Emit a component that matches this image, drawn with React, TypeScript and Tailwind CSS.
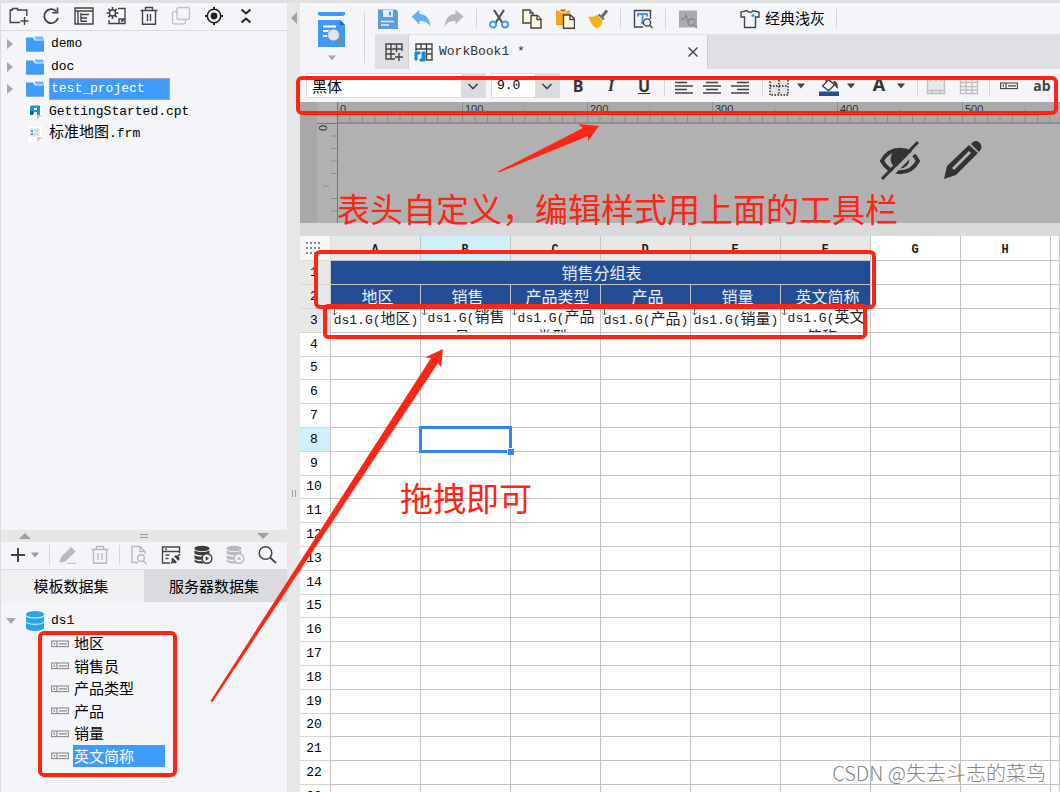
import type { ReactNode } from "react"
import clsx from "clsx"

const columns = ["A", "B", "C", "D", "E", "F", "G", "H", "I"]
const fields = ["地区", "销售员", "产品类型", "产品", "销量", "英文简称"]
const headers = ["地区", "销售", "产品类型", "产品", "销量", "英文简称"]
const rows = Array.from({ length: 23 }, (_, i) => i + 1)

const MONO = "font-['Liberation_Mono','Noto_Sans_CJK_SC',monospace]"

// Latin runs are set a little smaller than the Chinese ones
function Mixed({ text }: { text: string }) {
  const parts = text.match(/[\x20-\x7e]+|[^\x20-\x7e]+/g) ?? []
  return (
    <span className={clsx(MONO, "text-[13px]")}>
      {parts.map((part, i) => (
        <span key={i} className={/^[\x20-\x7e]/.test(part) ? "text-[13px]" : "text-[15px]"}>
          {part}
        </span>
      ))}
    </span>
  )
}

function Icon({ children, className = "size-5", box = 20 }: { children: ReactNode; className?: string; box?: number }) {
  return (
    <svg viewBox={`0 0 ${box} ${box}`} className={clsx("shrink-0", className)} fill="none" stroke="#444" strokeWidth="1.4" aria-hidden="true">
      {children}
    </svg>
  )
}

function IconButton({ label, children, className = "size-5" }: { label: string; children: ReactNode; className?: string }) {
  return (
    <button type="button" aria-label={label} className={clsx("flex shrink-0 items-center justify-center", className)}>
      {children}
    </button>
  )
}

function Sep({ className = "" }: { className?: string }) {
  return <span className={clsx("h-5 w-px shrink-0 bg-[#d6d7da]", className)} />
}

function Caret({ color = "#444" }: { color?: string }) {
  return (
    <svg viewBox="0 0 10 6" className="h-[6px] w-[10px] shrink-0" aria-hidden="true">
      <path d="M1 0.5h8L5 5.5z" fill={color} />
    </svg>
  )
}

function FolderIcon() {
  return (
    <svg viewBox="0 0 18 16" className="h-4 w-[18px] shrink-0" aria-hidden="true">
      <path d="M0 1.500h7l2 3h9V15a.8.8 0 0 1-.8.8H.8A.8.8 0 0 1 0 15z" fill="#409cfb" />
      <path d="M8.300.8H17v1.600h1v1.200h-8z" fill="#409cfb" />
      <path d="M8.800 2.200H17" stroke="#cfe4fb" strokeWidth="0.700" />
    </svg>
  )
}

function FileIcon({ kind }: { kind: "cpt" | "frm" }) {
  return (
    <svg viewBox="0 0 18 18" className="size-[18px] shrink-0" aria-hidden="true">
      <path d="M2 1h14v11l-4 5H2z" fill="#fff" />
      <path d="M11 17v-5h5z" fill="#c9cbcf" />
      {kind === "cpt" ? (
        <>
          <path d="M5 2.500h9V12h-3V9H8v2H4V4z" fill="#1693dc" />
          <path d="M8 5h3v2H8z" fill="#fff" />
          <path d="M4 8h3v4H4z" fill="#0763b4" />
        </>
      ) : (
        <>
          <path d="M4 4h9v7H4z" fill="#eef1f4" stroke="#c9ced4" strokeWidth="0.800" />
          <path d="M5 5h2v2H5zM5 8h2v2H5z" fill="#3b9fd9" />
          <path d="M8 6h4M8 9h4" stroke="#b9bec4" />
        </>
      )}
    </svg>
  )
}

function FieldIcon({ color = "#8b8b8b" }: { color?: string }) {
  return (
    <svg viewBox="0 0 18 8" className="h-2 w-[18px] shrink-0" fill="none" stroke={color} aria-hidden="true">
      <rect x="0.600" y="1" width="16.800" height="5.600" strokeWidth="1.100" />
      <path d="M6 1v5.600M8 3.800h8M3.300 2.600v2.400" strokeWidth="1.200" />
    </svg>
  )
}

function DbIcon({ color, badge }: { color: string; badge: "play" | "close" }) {
  return (
    <Icon>
      <g fill={color} stroke="none">
        <ellipse cx="9" cy="3.500" rx="7.500" ry="2.700" />
        <path d="M1.500 5.300c2 2.400 13 2.400 15 0v3.200c-2 2.400-13 2.400-15 0z" />
        <path d="M1.500 10c1.500 1.500 5 1.800 8 1.600v3c-3 .3-7 0-8-1.400z" />
        <path d="M1.500 14.500c1.500 1.500 4 1.800 7.500 1.700l2 2c-5 .7-9-.3-9.500-1.600z" />
      </g>
      <circle cx="14" cy="13.500" r="4.800" fill="#f4f5f8" stroke={color} strokeWidth="1.400" />
      {badge === "play" ? <path d="M12.700 11.300v4.400l3.300-2.200z" fill={color} stroke="none" /> : <path d="m12.300 11.800 3.400 3.400m0-3.400-3.400 3.400" stroke={color} strokeWidth="1.200" />}
    </Icon>
  )
}

function ProjectToolbar() {
  return (
    <div className="flex h-[28px] items-center justify-between border-b border-[#d9dadd] pr-[31px] pb-px pl-2">
      <IconButton label="新建文件夹">
        <Icon><path d="M11 16.500H1.200V4H3.500V2.500h5V4h9.300v6M1.200 4.300h2M15.500 11v8M11.500 15h8" /></Icon>
      </IconButton>
      <IconButton label="刷新">
        <Icon><path d="M15.500 5.500A7 7 0 1 0 17 12" strokeWidth="1.800" /><path d="M16.500 1.500v5.300h-5.300" strokeWidth="1.600" /></Icon>
      </IconButton>
      <IconButton label="展开目录">
        <Icon><path d="M1 2h18v16H1zM1 5h18M4 5v13M7 7v8.500M7 8.500h8M7 12h6M7 15.300h6" /></Icon>
      </IconButton>
      <IconButton label="设置">
        <Icon>
          <circle cx="6.500" cy="7" r="3" />
          <path d="M6.500 1v3M6.500 10v3M.5 7h3M9.500 7h3M2.300 2.800l2 2M8.700 9.200l2 2M10.700 2.800l-2 2M4.300 9.200l-2 2" strokeWidth="1.700" />
          <path d="M12 2.500h7v15H3V14M13 17v-4h6M15 15.500l3-1.500" />
        </Icon>
      </IconButton>
      <IconButton label="删除">
        <Icon><path d="M1.500 4.500h17M6.500 4V1.500h7V4M3.500 4.500v13.700h13V4.500M8.500 8v7M11.500 8v7" /></Icon>
      </IconButton>
      <IconButton label="复制">
        <Icon><g stroke="#c3c4c7"><rect x="6" y="1.500" width="12.500" height="12" rx="2" /><path d="M6 5.500H3.500a2 2 0 0 0-2 2V16a2 2 0 0 0 2 2h9a2 2 0 0 0 2-2v-2.500" /></g></Icon>
      </IconButton>
      <IconButton label="定位">
        <Icon><g stroke="#222"><circle cx="10" cy="10" r="6.700" strokeWidth="1.600" /><circle cx="10" cy="10" r="2.700" fill="#222" /><path d="M10 1v3M10 16v3M1 10h3M16 10h3" strokeWidth="2" /></g></Icon>
      </IconButton>
      <IconButton label="收起">
        <Icon><path d="m5.500 3.500 4.500 4 4.500-4M5.500 16.500l4.500-4 4.500 4" stroke="#222" strokeWidth="2" /></Icon>
      </IconButton>
    </div>
  )
}

function ProjectTree() {
  return (
    <ul className="flex flex-1 flex-col pt-[2px] leading-5">
      {["demo", "doc", "test_project"].map((name) => (
        <li key={name} className="flex h-[22px] items-center even:h-[23px]">
          <span className="ml-[6px] h-0 w-0 border-y-[5px] border-l-[6px] border-y-transparent border-l-[#a7a8ab]" />
          <span className="mr-[5px] ml-[13px] flex"><FolderIcon /></span>
          {name === "test_project" ? (
            <span className="flex h-[22px] w-[121px] items-center border border-[#a79cc8] bg-[#409cfb] px-px text-white"><Mixed text={name} /></span>
          ) : (
            <span className="flex px-[2px]"><Mixed text={name} /></span>
          )}
        </li>
      ))}
      <li className="flex h-[23px] items-center gap-[5px] pl-[25px]"><FileIcon kind="cpt" /><Mixed text="GettingStarted.cpt" /></li>
      <li className="flex h-[22px] items-center gap-[5px] pl-[25px]"><FileIcon kind="frm" /><Mixed text="标准地图.frm" /></li>
    </ul>
  )
}

function DatasetPanel() {
  return (
    <section className="h-[262px] shrink-0">
      <div className="flex h-3 items-center justify-between bg-[#e7e7e8] pr-[18px] pl-[18px]">
        <span className="border-x-[6px] border-b-[6px] border-x-transparent border-b-[#a0a1a4]" />
        <span className="h-1 w-2 border-y border-[#a0a1a4]" />
        <span className="border-x-[6px] border-t-[6px] border-x-transparent border-t-[#a0a1a4]" />
      </div>
      <div className="flex h-7 items-center border-b border-[#dcdde0] pb-px pl-2">
        <button type="button" aria-label="新增数据集" className="flex w-[31px] items-center gap-[3px]">
          <Icon className="size-[18px]" box={18}><path d="M9 2v14M2 9h14" strokeWidth="2" /></Icon>
          <Caret color="#999" />
        </button>
        <Sep className="ml-[9px]" />
        <div className="ml-2 flex gap-3">
          <IconButton label="编辑">
            <Icon><path d="m2 17 1.500-5L13 2.500l4 4L7.500 16zM9 18.300h9" fill="#b9babd" stroke="#b9babd" strokeWidth="1" /></Icon>
          </IconButton>
          <IconButton label="删除数据集">
            <Icon><path d="M1.500 4.500h17M6.500 4V1.500h7V4M3.500 4.500v13.700h13V4.500M8 8v7M12 8v7" stroke="#b9babd" /></Icon>
          </IconButton>
        </div>
        <Sep className="ml-[9px]" />
        <div className="ml-[9px] flex gap-3">
          <IconButton label="预览">
            <Icon><path d="M9 17.500H3v-16h8l5 5V9M11 1.500v5h5M14.500 16l3 3" stroke="#b9babd" /><circle cx="12" cy="13" r="3.300" stroke="#b9babd" /></Icon>
          </IconButton>
          <IconButton label="编辑连接">
            <Icon>
              <path d="M9 18H1.500V2h17v6M1.500 6.500h17M4 4.300h2M4.500 10h4M4.500 13.500h3" />
              <path d="m10 18.500 2-2M17 11l2-2" strokeWidth="1.600" />
              <path d="m11.500 12.500 4.500 4.500-1.500 1.200c-3 .5-4.500-2-4-4.200zM13 11.500l1.500-1.200c3-.5 4.500 2 4 4.200l-1.200 1.200z" fill="#444" stroke="none" />
            </Icon>
          </IconButton>
          <IconButton label="连接数据库"><DbIcon color="#3c3c3c" badge="play" /></IconButton>
          <IconButton label="断开数据库"><DbIcon color="#b9babd" badge="close" /></IconButton>
          <IconButton label="搜索">
            <Icon><circle cx="8.500" cy="8" r="6.300" strokeWidth="1.500" /><path d="m13 12.500 6 5.500" strokeWidth="1.800" /></Icon>
          </IconButton>
        </div>
      </div>
      <div className="flex h-8 text-[15px]">
        <button type="button" className="flex-1 bg-[#f1f1f3] pr-[3px]">模板数据集</button>
        <button type="button" className="flex-1 bg-[#d9dbdf] pr-[3px]">服务器数据集</button>
      </div>
      <ul className="pt-2">
        <li className="flex h-[22px] items-center leading-5">
          <span className="ml-[5px] border-x-[5px] border-t-[6px] border-x-transparent border-t-[#a7a8ab]" />
          <svg viewBox="0 0 18 20" className="mr-[7px] ml-[10px] h-5 w-[18px]" aria-hidden="true">
            <path d="M0 3v14c1 4 17 4 18 0V3z" fill="#2ba5e3" />
            <ellipse cx="9" cy="3" rx="9" ry="3" fill="#2ba5e3" />
            <path d="M0 4.500c1 3.300 17 3.300 18 0M0 10.800c1 3.300 17 3.300 18 0" stroke="#f4f5f8" strokeWidth="1.100" fill="none" />
          </svg>
          <Mixed text="ds1" />
        </li>
        {fields.map((field) => (
          <li key={field} className="flex h-[22px] items-center gap-1 pl-[50px] even:h-[23px]">
            <FieldIcon />
            <span className={clsx("flex h-[22px] items-center px-px text-[15px]", field === "英文简称" && "w-[92px] bg-[#409cfb] text-white")}>{field}</span>
          </li>
        ))}
      </ul>
    </section>
  )
}

function MainToolbar() {
  return (
    <div className="flex h-8 items-center gap-[11px] border-b border-[#e0e1e3] pl-[2px]">
      <IconButton label="保存" className="size-[22px]">
        <Icon>
          <path d="M0 .5h18l2 2V20H0z" fill="#5b9cdb" stroke="none" />
          <path d="M5 1h10v7H5z" fill="#e4eefa" stroke="none" />
          <path d="M11 2.500h2v4h-2z" fill="#5b9cdb" stroke="none" />
          <path d="M3 12.500h13M3 16h8" stroke="#e4eefa" strokeWidth="1.500" />
        </Icon>
      </IconButton>
      <IconButton label="撤销" className="size-[22px]">
        <Icon><path d="M.5 7.500 8.500 1v4C15 5 19 10 19.500 18c-2-4-5-6.500-11-6v3.500z" fill="#6aaef0" stroke="none" /></Icon>
      </IconButton>
      <IconButton label="重做" className="size-[22px]">
        <Icon><path d="M19.500 7.500 11.500 1v4C5 5 1 10 .5 18c2-4 5-6.500 11-6v3.500z" fill="#b7b8ba" stroke="none" /></Icon>
      </IconButton>
      <Sep />
      <IconButton label="剪切" className="size-[22px]">
        <Icon>
          <path d="m5 1 8.500 13M15 1 6.500 14" stroke="#555" strokeWidth="2.200" />
          <circle cx="4" cy="15.500" r="3" stroke="#3f9bf5" strokeWidth="1.900" />
          <circle cx="16" cy="15.500" r="3" stroke="#3f9bf5" strokeWidth="1.900" />
        </Icon>
      </IconButton>
      <IconButton label="复制单元格" className="size-[22px]">
        <Icon><g fill="#fff8e4"><path d="M1 1h7l3 3v10H1z" /><path d="M8 1v3h3" /><path d="M9 6.500h6.500l3.500 3.500v9H9z" /><path d="M15 6.500v4h4" /></g></Icon>
      </IconButton>
      <IconButton label="粘贴" className="size-[22px]">
        <Icon>
          <path d="M1 1.500h14V16H1z" fill="#f2a818" stroke="none" />
          <path d="M5 0h6v3H5z" fill="#c76b1b" stroke="#fff" strokeWidth="0.800" />
          <path d="M8.500 6h7l4 4v9.300h-11z" fill="#fff8e4" /><path d="M15 6v4.500h4.500" />
        </Icon>
      </IconButton>
      <IconButton label="格式刷" className="size-[22px]">
        <Icon>
          <path d="m19 1.500-5 6" stroke="#666b75" strokeWidth="3" />
          <path d="m10.500 5.500 5.500 5" stroke="#666b75" strokeWidth="2" />
          <path d="M.5 7.500c4 1 6-.5 8.500-1.500l5.500 5.500c0 3.500-2 6.500-5.500 8C5.500 18 2 13.500.5 7.500z" fill="#f4b01e" stroke="none" />
        </Icon>
      </IconButton>
      <Sep />
      <IconButton label="查找" className="size-[22px]">
        <Icon><path d="M10 18H1.500V1.500h16V10M16.500 16l3 3" /><path d="M5 7.500V5h9v2.500M9.500 5v9M8 14h3" stroke="#3f9bf5" strokeWidth="2" /><circle cx="14" cy="13.500" r="3.600" fill="#f4f5f8" /></Icon>
      </IconButton>
      <Sep />
      <IconButton label="性能检测" className="size-[22px]">
        <Icon><path d="M1 1.500h18v17H1z" fill="#aaabad" stroke="none" /><path d="M3 10h3l2-4 2 7 2-3M16 16l3 3" stroke="#8b8c8e" /><circle cx="13.500" cy="13" r="3.300" stroke="#8b8c8e" /></Icon>
      </IconButton>
      <button type="button" className="ml-[30px] flex items-center gap-[5px] text-[15px] whitespace-nowrap">
        <Icon><path d="M7 1.500c1 2.500 5 2.500 6 0L19 3v5h-3.500v10.500h-11V8H1V3z" /><circle cx="13" cy="6.500" r="1.600" fill="#3f9bf5" stroke="none" /></Icon>
        经典浅灰
      </button>
      <Sep />
    </div>
  )
}

function WorkbookTabs() {
  return (
    <div className="flex h-[34px] bg-[#dfe0e3]">
      <button type="button" aria-label="新建工作簿" className="flex w-[34px] items-center justify-center border-r border-[#d0d1d4] pl-1">
        <Icon><path d="M18 9V2H2v15h9M2 7h16M2 12h9M7 2v15M12.500 2v8M15 11v8M11 15h8" /></Icon>
      </button>
      <div className="flex w-[299px] items-center border-r border-[#cdced1] bg-[#f4f5f8] pr-1 pl-[5px]">
        <Icon>
          <path d="M2 9V2h16v16h-6M2 7h16M7 2v5M12.500 2v16M12 12h6" />
          <path d="M1 10h5v2H3v6H1zM8 10h3v9H6v-2h2z" fill="#1687d9" stroke="#1687d9" strokeWidth="1" />
        </Icon>
        <span className={clsx(MONO, "ml-[5px] flex-1 text-[13px] text-[#333]")}>WorkBook1 *</span>
        <button type="button" aria-label="关闭" className="p-1">
          <Icon className="size-3" box={12}><path d="m1.500 1.500 9 9m0-9-9 9" /></Icon>
        </button>
      </div>
    </div>
  )
}

function ComboBox({ label, value, options, className }: { label: string; value: string; options: string[]; className: string }) {
  return (
    <label className={clsx("relative flex h-[25px] shrink-0 border border-[#dcdde0] bg-white", className)}>
      <select aria-label={label} defaultValue={value} className={clsx("w-full appearance-none bg-transparent pl-[5px] leading-[23px] outline-none", /^\d/.test(value) ? "font-['Liberation_Mono',monospace] text-[13px]" : "font-['Noto_Sans_CJK_SC',sans-serif] text-[15px]")}>
        {options.map((option) => (
          <option key={option}>{option}</option>
        ))}
      </select>
      <span className="pointer-events-none absolute inset-y-0 right-0 flex w-6 items-center justify-center bg-[#d9dbdf]">
        <Icon className="size-3" box={12}><path d="m1.500 4 4.500 4.500L10.500 4" strokeWidth="1.600" /></Icon>
      </span>
    </label>
  )
}

function FormatBar() {
  return (
    <div className="flex h-[33px] items-center overflow-hidden bg-[#f4f5f8] pl-[6px]">
      <ComboBox label="字体" value="黑体" options={["黑体", "宋体"]} className="w-[180px]" />
      <ComboBox label="字号" value="9.0" options={["9.0", "10.0", "12.0"]} className="ml-[5px] w-[69px]" />
      <div className="ml-2 flex shrink-0 gap-[13px] text-base leading-5 text-[#333]">
        <button type="button" className="w-5 font-['Open_Sans',sans-serif] font-bold">B</button>
        <button type="button" className="w-5 font-['Liberation_Serif',serif] font-bold italic">I</button>
        <button type="button" className="w-5 font-['Open_Sans',sans-serif] font-bold underline">U</button>
      </div>
      <Sep className="ml-[10px]" />
      <div className="ml-[9px] flex shrink-0 gap-2">
        <IconButton label="左对齐"><Icon><path d="M1 3h18M1 6.500h12M1 10h18M1 13.500h12M1 17h18" /></Icon></IconButton>
        <IconButton label="居中"><Icon><path d="M1 3h18M4 6.500h12M1 10h18M4 13.500h12M1 17h18" /></Icon></IconButton>
        <IconButton label="右对齐"><Icon><path d="M1 3h18M7 6.500h12M1 10h18M7 13.500h12M1 17h18" /></Icon></IconButton>
      </div>
      <Sep className="ml-3" />
      <div className="ml-[6px] flex shrink-0 gap-[13px]">
        <button type="button" aria-label="边框" className="flex items-center gap-[7px]">
          <Icon><path d="M1 1h18v18H1zM1 10h18M10 1v18" fill="#e3e3e5" strokeDasharray="1.500 1.500" stroke="#222" /></Icon>
          <Caret />
        </button>
        <button type="button" aria-label="填充颜色" className="flex items-center gap-[7px]">
          <Icon><path d="m3.500 10 6.500-6.500 5.500 5.500-6 5.500zM7 5.500V2.500a2 2 0 0 1 4 0V6" /><path d="M14 5c4 0 5 2.500 5 8-2-1-2.500-3-3.500-4z" fill="#444" stroke="none" /><path d="M0 15.500h20v4.500H0z" fill="#234e95" stroke="none" /></Icon>
          <Caret />
        </button>
        <button type="button" aria-label="字体颜色" className="flex items-center gap-[7px]">
          <span className="flex h-5 w-5 flex-col items-center border-b-4 border-[#f2f8ff] font-['Open_Sans',sans-serif] text-lg leading-4 font-bold text-[#333]">A</span>
          <Caret />
        </button>
      </div>
      <Sep className="ml-[11px]" />
      <div className="ml-2 flex shrink-0 gap-[13px]">
        <IconButton label="合并单元格"><Icon><path d="M1.500 2.500h17v15h-17zM1.500 14.500h17M6 14.500v3M14 14.500v3M5 2.500v3M10 2.500v3M15 2.500v3" stroke="#bfc0c2" fill="#e8e8ea" /></Icon></IconButton>
        <IconButton label="取消合并"><Icon><path d="M1.500 2.500h17v15h-17zM1.500 6.500h17M1.500 10.500h17M1.500 14h17M7 2.500v15M13 2.500v15" stroke="#bfc0c2" /></Icon></IconButton>
      </div>
      <Sep className="ml-[10px]" />
      <div className="ml-[9px] flex shrink-0 items-center gap-[13px]">
        <IconButton label="插入数据列"><FieldIcon color="#444" /></IconButton>
        <button type="button" className="w-5 font-['Open_Sans',sans-serif] text-sm leading-5 font-bold text-[#444]">ab</button>
      </div>
    </div>
  )
}

function ReportCanvas() {
  const ticks = Array.from({ length: 58 }, (_, i) => i)
  return (
    <div className="flex h-[121px] shrink-0 bg-[#b1b1b1]">
      <svg className="h-full w-[38px] shrink-0" stroke="#8e8e8e" aria-hidden="true">
        <rect width="17" height="121" fill="#a8a8a8" stroke="none" />
        <path d="M17 21.500h21M37.500 0v121" stroke="#777" />
        {ticks.slice(1, 8).map((i) => (
          <path key={i} d={`M${i === 5 ? 23 : 31} ${21.5 + i * 12.5}h6`} />
        ))}
        <text x="-29" y="27" transform="rotate(-90)" fontSize="11" fill="#333" stroke="none" className="font-['Liberation_Sans',sans-serif]">0</text>
      </svg>
      <div className="flex min-w-0 flex-1 flex-col">
        <svg className="h-[22px] w-full border-b-2 border-[#8f8f8f] bg-[#aaaaaa]" stroke="#8e8e8e" aria-hidden="true">
          {ticks.map((i) => (
            <path key={i} d={`M${i * 12.5 - 0.5} 20V${i % 10 === 0 ? 0 : i % 5 === 0 ? 7 : 14}`} />
          ))}
          {ticks.filter((i) => i % 10 === 0).map((i) => (
            <text key={i} x={i * 12.5 + 2} y="11" fontSize="11" fill="#333" stroke="none" className="font-['Liberation_Sans',sans-serif]">{i * 10}</text>
          ))}
        </svg>
        <div className="flex justify-end gap-[23px] pt-4 pr-[77px]">
          <Icon className="size-10" box={40}>
            <path d="M2 21C10 6 30 6 38 21 30 36 10 36 2 21z" stroke="#333" strokeWidth="3.800" />
            <circle cx="20" cy="19" r="9.500" fill="#333" stroke="none" />
            <path d="M4 42 40 6" stroke="#b1b1b1" strokeWidth="4" />
            <path d="M2 39 38 2" stroke="#333" strokeWidth="3" />
          </Icon>
          <Icon className="size-10" box={40}>
            <path d="m1 39 3-13L26 5l9 8-22 22z" fill="#333" stroke="none" />
            <path d="M10 29 27 12" stroke="#b1b1b1" strokeWidth="3" />
            <path d="m28 4 2-2c4-3 10 2 8 7l-2 3z" fill="#333" stroke="none" />
          </Icon>
        </div>
      </div>
    </div>
  )
}

const cell = "border-r border-b border-[#c4c4c4] p-0"

function Sheet() {
  return (
    <table className="w-full table-fixed border-separate border-spacing-0 bg-white">
      <colgroup>
        <col className="w-[31px]" />
        {columns.map((c) => (
          <col key={c} className={c === "I" ? "" : "w-[90px]"} />
        ))}
      </colgroup>
      <thead>
        <tr className="h-[25px]">
          <th aria-label="全选" className="border-r border-b border-[#dedee0] bg-[#f7f7f9] p-0 pr-[5px]">
            <svg viewBox="0 0 14 12" className="mx-auto h-3 w-[14px]" fill="#888" aria-hidden="true">
              {[0, 4, 8, 12].map((x) => [0, 5, 10].map((y) => <rect key={`${x}-${y}`} x={x} y={y} width="2" height="2" />))}
            </svg>
          </th>
          {columns.map((c, i) => (
            <th key={c} className={clsx("overflow-hidden border-r border-b border-[#c4c4c4] p-0 pt-1 pr-px text-xs leading-4 font-bold text-[#222]", MONO, i === 1 ? "bg-[#cfeffb]" : i < 6 ? "bg-[#e8e8e8]" : "bg-white")}>
              {c === "I" ? "" : c}
            </th>
          ))}
        </tr>
      </thead>
      <tbody>
        {rows.map((row) => (
          <tr key={row} className="h-6 [&:nth-child(5n)]:h-[23px]">
            <th className={clsx("border-r border-b border-r-[#c4c4c4] border-b-[#d6d6d6] p-0 pr-[2px] text-[13px] leading-4 font-normal", MONO, row === 8 ? "bg-[#cfeffb]" : row < 4 ? "bg-[#e8e8e8]" : "bg-white")}>{row}</th>
            {row === 1 && <td colSpan={6} className={clsx(cell, "bg-[#234e95] pb-[2px] pl-[2px] text-center text-base leading-5 text-[#e9eef6]")}>销售分组表</td>}
            {columns.slice(row === 1 ? 6 : 0).map((c) => {
              const i = columns.indexOf(c)
              if (row === 2 && i < 6) {
                return <td key={c} className={clsx(cell, "bg-[#234e95] pb-[2px] pl-1 text-center text-base leading-5 text-[#e9eef6]")}>{headers[i]}</td>
              }
              if (row === 3 && i < 6) {
                return (
                  <td key={c} className={clsx(cell, "relative")}>
                    <svg viewBox="0 0 7 7" className="absolute top-0 left-0 size-[7px]" fill="none" stroke="#666" aria-hidden="true">
                      <path d="M3.500 0v6M1 3.500 3.500 6 6 3.500" />
                    </svg>
                    {/* long expressions wrap, the row only shows the top of the second line */}
                    <div className={clsx("flex h-[23px] justify-center overflow-hidden pl-px text-center text-[13px] leading-5 text-[#222]", MONO, fields[i].length > 2 ? "items-start" : "items-center")}>
                      <Mixed text={`ds1.G(${fields[i]})`} />
                    </div>
                  </td>
                )
              }
              return (
                <td key={c} className={clsx(cell, "relative")}>
                  {row === 8 && c === "B" && (
                    <div className="absolute -inset-[2px] z-10 border-[3px] border-[#3584ef]">
                      <span className="absolute -right-[5px] -bottom-[5px] size-[7px] border-t border-l border-white bg-[#3584ef]" />
                    </div>
                  )}
                </td>
              )
            })}
          </tr>
        ))}
      </tbody>
    </table>
  )
}

// Hand-drawn notes that float over the designer
function Annotations() {
  return (
    <div className="pointer-events-none absolute inset-0 z-20">
      <svg className="absolute inset-0 h-full w-full" fill="none" stroke="#ff2414" strokeWidth="4" aria-hidden="true">
        <rect x="298" y="78" width="758" height="35" rx="4" />
        <rect x="316" y="252" width="558" height="55" rx="4" />
        <rect x="325" y="306" width="540" height="31" rx="3" />
        <rect x="40" y="633" width="135" height="142" rx="4" />
        <path d="M498 171.500 583 128l-5-4 21 2-11 15v-5l-89 36.500z" fill="#ff2414" stroke="none" />
        <path d="m210.500 701 220.500-343-6-.5 18-8.500-2 18-3-4L212.500 702z" fill="#ff2414" stroke="none" />
      </svg>
      <p className="absolute top-[184px] left-[337px] text-[33px] leading-[48px] whitespace-nowrap text-[#ff2414]">表头自定义，编辑样式用上面的工具栏</p>
      <p className="absolute top-[473px] left-[400px] text-[33px] leading-[48px] whitespace-nowrap text-[#ff2414]">拖拽即可</p>
      <p className="absolute right-[14px] bottom-[5px] text-xl leading-7 font-light whitespace-nowrap text-[#858585]">CSDN @失去斗志的菜鸟</p>
    </div>
  )
}

export default function App() {
  return (
    <div className="relative flex h-screen overflow-hidden border-t-[3px] border-[#dfe0e2] bg-[#e7e7e8] font-['Noto_Sans_CJK_SC',sans-serif] text-black">
      <aside className="flex w-[287px] shrink-0 flex-col border-l border-[#dcdde0] bg-[#f4f5f8]">
        <ProjectToolbar />
        <ProjectTree />
        <DatasetPanel />
      </aside>
      <div className="flex w-[13px] shrink-0 flex-col items-center">
        <span className="mt-[9px] border-y-[6px] border-r-[6px] border-y-transparent border-r-[#a0a1a4]" />
        <span className="mt-[466px] h-[7px] w-1 border-x border-[#a0a1a4]" />
      </div>
      <main className="flex min-w-0 flex-1 flex-col overflow-hidden">
        <div className="flex bg-[#f4f5f8]">
          <button type="button" aria-label="预览模板" className="flex w-16 shrink-0 flex-col items-center gap-2 pt-2">
            <svg viewBox="0 0 28 36" className="h-9 w-7" aria-hidden="true">
              <path d="M0 1h27v2.500l-2 1.500H2L0 3.500zM0 9h22l5 5v22H0z" fill="#3f98f5" />
              <path d="M22 9v5h5z" fill="#2566ab" />
              <path d="M5 15.500h13M5 20h7M5 25h5" stroke="#fff" strokeWidth="2" />
              <path d="m20 28 5 5" stroke="#888" strokeWidth="3" />
              <circle cx="15.500" cy="24" r="6" fill="#d8e8f7" stroke="#8a9098" strokeWidth="1" />
            </svg>
            <Caret color="#aaa" />
          </button>
          <Sep className="mt-2 h-[52px]" />
          <div className="ml-[10px] min-w-0 flex-1">
            <MainToolbar />
            <WorkbookTabs />
          </div>
        </div>
        <FormatBar />
        <ReportCanvas />
        <div className="h-[13px] shrink-0 bg-[#dadadd]" />
        <div className="min-h-0 flex-1 overflow-hidden">
          <Sheet />
        </div>
      </main>
      <div className="absolute inset-x-0 -top-[3px] bottom-0 z-20">
        <Annotations />
      </div>
    </div>
  )
}
